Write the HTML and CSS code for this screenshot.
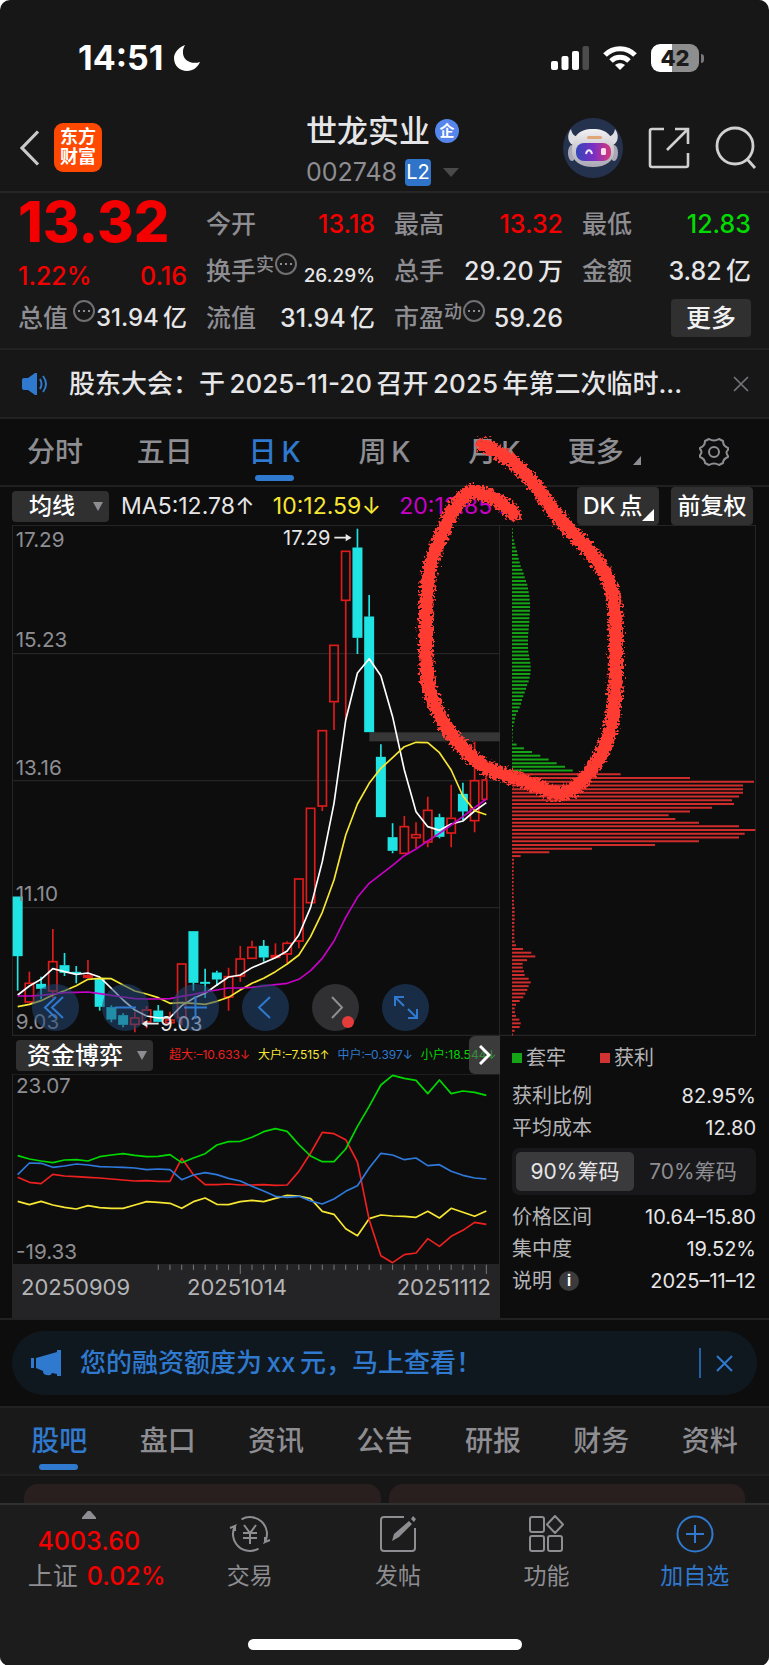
FILE: index.html
```html
<!DOCTYPE html>
<html lang="zh-CN">
<head>
<meta charset="utf-8">
<meta name="viewport" content="width=device-width, initial-scale=1">
<title>世龙实业 002748</title>
<link rel="stylesheet" href="styles.css">
</head>
<body>
<div class="app">
  <div class="status">
    <div class="status-time">14:51
      <svg width="26" height="26" viewBox="0 0 26 26"><path d="M11 0C3 3 0 9 0 13c0 8 6 13 13 13 6 0 11-4 13-9C17 20 8 15 9 6c0-2 1-4 2-6z" fill="#fff"/></svg>
    </div>
    <div class="status-icons">
      <svg width="38" height="24" viewBox="0 0 38 24" fill="#fff"><rect y="15" width="7" height="9" rx="2"/><rect x="10.500" y="10" width="7" height="14" rx="2"/><rect x="21" y="5" width="7" height="19" rx="2"/><rect x="31.500" width="6.500" height="24" rx="2" fill="#4c4c4c"/></svg>
      <svg class="wifi" width="34" height="24" viewBox="0 0 34 24" fill="none" stroke="#fff" stroke-width="5"><path d="M2 9c8-8.500 22-8.500 30 0"/><path d="M8 15c5-5 13-5 18 0"/><path d="M17 24l-5-5c3-2.500 7-2.500 10 0z" fill="#fff" stroke="none"/></svg>
      <span class="battery">42</span>
    </div>
  </div>

  <header class="header">
    <div class="header-side header-left">
      <button class="icon-btn" aria-label="返回"><svg width="21" height="36" viewBox="0 0 21 36" fill="none" stroke="#c9c9c9" stroke-width="3.200"><path d="M19 1.500 3 18l16 16.500"/></svg></button>
      <a class="logo" href="#">东方<br>财富</a>
    </div>
    <div class="header-title">
      <h1>世龙实业<span class="corp">企</span></h1>
      <p class="code">002748<span class="l2">L2</span><svg width="16" height="9" viewBox="0 0 16 9"><path d="M0 0h16L8 9z" fill="#4a4a4a"/></svg></p>
    </div>
    <div class="header-side header-right">
      <button class="icon-btn" aria-label="智能助手">
        <svg width="60" height="60" viewBox="0 0 60 60"><defs><linearGradient id="visor"><stop offset="0" stop-color="#3146b8"/><stop offset=".5" stop-color="#7a2fc4"/><stop offset="1" stop-color="#d83878"/></linearGradient><linearGradient id="shell" x2="0" y2="1"><stop offset="0" stop-color="#f1f0f2"/><stop offset="1" stop-color="#aaa8b5"/></linearGradient></defs><circle cx="30" cy="30" r="30" fill="#25324e"/><path d="M10 27C4 24 4 16 8 11c1 5 3 7 7 8M50 27c6-3 6-11 2-16-1 5-3 7-7 8" fill="#dedde2"/><ellipse cx="9" cy="35" rx="4" ry="8" fill="#a9a8b4"/><ellipse cx="51" cy="35" rx="4" ry="8" fill="#a9a8b4"/><path d="M30 11c15 0 21 8 21 22 0 10-8 16-21 16S9 43 9 33c0-14 6-22 21-22z" fill="url(#shell)"/><rect x="13" y="25" width="35" height="18" rx="8" fill="url(#visor)"/><rect x="24" y="18" width="15" height="3" rx="1.500" fill="#dfa777"/><path d="M23 36c1-5 5-5 6 0" fill="none" stroke="#e8e8ff" stroke-width="2"/><rect x="38" y="30" width="5" height="7" rx="1.500" fill="#ffdbe8"/></svg>
      </button>
      <button class="icon-btn" aria-label="分享"><svg width="42" height="42" viewBox="0 0 42 42" fill="none" stroke="#d0d0d0" stroke-width="2.600"><path d="M16 2H4a2 2 0 0 0-2 2v34a2 2 0 0 0 2 2h34a2 2 0 0 0 2-2V26M27 2h13v15M39 3 19 23"/></svg></button>
      <button class="icon-btn" aria-label="搜索"><svg width="42" height="43" viewBox="0 0 42 43" fill="none" stroke="#d0d0d0" stroke-width="2.800"><circle cx="20" cy="20" r="18"/><path d="m32 33 8 9"/></svg></button>
    </div>
  </header>

  <section class="quote">
    <div class="cell price up">13.32</div>
    <div class="cell"><span>今开</span><b class="up">13.18</b></div>
    <div class="cell"><span>最高</span><b class="up">13.32</b></div>
    <div class="cell"><span>最低</span><b class="down">12.83</b></div>
    <div class="cell change up"><b>1.22%</b><b>0.16</b></div>
    <div class="cell"><span>换手<sup>实</sup><i class="dots"></i></span><b class="small">26.29%</b></div>
    <div class="cell"><span>总手</span><b>29.20&thinsp;万</b></div>
    <div class="cell"><span>金额</span><b>3.82&thinsp;亿</b></div>
    <div class="cell"><span>总值<i class="dots apart"></i></span><b class="mid">31.94&thinsp;亿</b></div>
    <div class="cell"><span>流值</span><b>31.94&thinsp;亿</b></div>
    <div class="cell"><span>市盈<sup>动</sup><i class="dots"></i></span><b>59.26</b></div>
    <div class="cell cell-end"><button class="more-btn">更多</button></div>
  </section>

  <section class="notice">
    <svg width="26" height="22" viewBox="0 0 26 22"><path d="M0 7q0-2 2-2h4l7-5q2-1 2 1v20q0 2-2 1l-7-5H2q-2 0-2-2z" fill="#2f79cf"/><path d="M18 6q3 5 0 10M21 3q6 8 0 16" fill="none" stroke="#2f79cf" stroke-width="2"/></svg>
    <a href="#">股东大会：于&thinsp;2025-11-20&thinsp;召开&thinsp;2025&thinsp;年第二次临时...</a>
    <button class="icon-btn" aria-label="关闭"><svg width="16" height="16" viewBox="0 0 16 16" stroke="#77777b" stroke-width="1.600"><path d="m1 1 14 14M15 1 1 15"/></svg></button>
  </section>

  <section class="chart">
    <nav class="periods">
      <button>分时</button><button>五日</button><button class="active">日&thinsp;K</button><button>周&thinsp;K</button><button>月&thinsp;K</button><button>更多<svg class="corner" width="8" height="9" viewBox="0 0 8 9"><path d="M8 0v9H0z" fill="#8d8d92"/></svg></button>
      <button aria-label="设置"><svg width="32" height="30" viewBox="0 0 32 30" fill="none" stroke="#8d8d92" stroke-width="2"><path d="M11 2q5 3 10 0l4 2q0 5 5 7v2q-3 2 0 6v1q-5 2-5 6l-4 2q-5-3-10 0l-4-2q0-4-5-6v-2q3-3 0-6v-1q5-2 5-7z" stroke-linejoin="round"/><circle cx="16" cy="15" r="5"/></svg></button>
    </nav>
    <div class="toolbar">
      <span class="picker"><select aria-label="指标"><option>均线</option></select></span>
      <p class="ma"><span>MA5:12.78<i>↑</i></span><span class="yellow">10:12.59<i>↓</i></span><span class="magenta">20:12.85<i>↑</i></span></p>
      <button class="tool dk">DK&thinsp;点<svg width="12" height="12" viewBox="0 0 12 12"><path d="M12 0v12H0z" fill="#fff"/></svg></button>
      <button class="tool">前复权</button>
    </div>
    <div class="board">
      <div class="left">
        <div class="kline">
          <svg id="kline" class="plot" viewBox="36 -765 1464 1533">
            <path d="M37-764H1499V766H37zM37-379H1499M37 2H1499M37 383H1499" fill="none" stroke="#252526" stroke-width="4"/>
            <rect x="1108" y="-143" width="392" height="27" fill="#363636"/>
            <g id="candles" stroke-width="5"></g>
            <g class="axis"><text x="47" y="-700">17.29</text><text x="47" y="-400">15.23</text><text x="47" y="-16">13.16</text><text x="47" y="364">11.10</text><text x="47" y="746">9.03</text></g>
            <g id="averages" fill="none" stroke-width="5"></g>
            <g class="marks"><text x="849" y="-706">17.29</text><text x="481" y="752">9.03</text></g>
            <path d="M1003-727h40M440 731h36" stroke="#e8e8e8" stroke-width="5"/><path d="M1055-727l-18-11v22zM424 731l18-11v22z" fill="#e8e8e8"/>
          </svg>
          <div class="controls">
            <button aria-label="最早"><svg viewBox="0 0 47 47"><path d="M24 13 13 23.500 24 34M31 13 20 23.500 31 34"/></svg></button>
            <button aria-label="缩小"><svg viewBox="0 0 47 47"><path d="M13 23.500h21"/></svg></button>
            <button aria-label="放大"><svg viewBox="0 0 47 47"><path d="M12 23.500h23M23.500 12v23"/></svg></button>
            <button aria-label="左移"><svg viewBox="0 0 47 47"><path d="M28 13 17 23.500 28 34"/></svg></button>
            <button class="gray" aria-label="右移"><svg viewBox="0 0 47 47"><path d="m20 13 10 10.500L20 34"/><circle cx="36" cy="38" r="6" fill="#e43b3b" stroke="none"/></svg></button>
            <button aria-label="全屏"><svg viewBox="0 0 47 47"><path d="M22 13h-9v9M13 13l9 9M26 34h9v-9M35 34l-9-9"/></svg></button>
          </div>
        </div>
        <div class="fund-head">
          <span class="picker wide"><select aria-label="副图指标"><option>资金博弈</option></select></span>
          <p class="fund-values"><span class="c-red">超大:–10.633↓</span><span class="c-yellow">大户:–7.515↑</span><span class="c-blue">中户:–0.397↓</span><span class="c-green">小户:18.544↓</span></p>
          <button class="next" aria-label="展开"><svg width="12" height="20" viewBox="0 0 12 20" fill="none" stroke="#fff" stroke-width="3"><path d="m1 1 9 9-9 9"/></svg></button>
        </div>
        <svg class="plot" viewBox="36 133 1464 570">
          <path d="M37 133H1499V703M37 133V703" fill="none" stroke="#252526" stroke-width="4"/>
          <g class="axis"><text x="48" y="190">23.07</text><text x="48" y="688">-19.33</text></g>
          <g id="funds" fill="none" stroke-width="5"></g>
        </svg>
        <div class="dates">
          <svg class="plot ticks" viewBox="36 702 1464 30"><g id="ticks" stroke="#77777a" stroke-width="3"></g></svg>
          <div class="date-row"><span>20250909</span><span>20251014</span><span>20251112</span></div>
        </div>
      </div>
      <div class="right">
        <svg class="plot" viewBox="0 -765 768 1533"><path d="M0-764H767V766H0" fill="none" stroke="#252526" stroke-width="4"/><g id="chips" stroke-width="6"></g></svg>
        <div class="stats">
          <p class="legend"><span class="key trapped">套牢</span><span class="key profit">获利</span></p>
          <p class="stat"><span>获利比例</span><b>82.95%</b></p>
          <p class="stat"><span>平均成本</span><b>12.80</b></p>
          <div class="segment"><button class="on">90%筹码</button><button>70%筹码</button></div>
          <p class="stat"><span>价格区间</span><b>10.64–15.80</b></p>
          <p class="stat"><span>集中度</span><b>19.52%</b></p>
          <p class="stat"><span>说明<i class="info">i</i></span><b>2025–11–12</b></p>
        </div>
      </div>
    </div>
    <svg class="scribble" viewBox="0 418 769 900" aria-hidden="true">
      <defs><filter id="rough" x="-10%" y="-10%" width="120%" height="120%"><feTurbulence type="fractalNoise" baseFrequency=".4" numOctaves="2" seed="4"/><feDisplacementMap in="SourceGraphic" scale="11" xChannelSelector="R" yChannelSelector="G"/></filter></defs>
      <g filter="url(#rough)"><path transform="translate(340 420) scale(.333)" d="M428 72C470 92 505 108 535 138S590 195 610 225S660 300 700 338S780 425 802 470S828 560 828 640S832 790 822 870S790 1000 760 1040S705 1112 670 1118S600 1098 560 1083S460 1060 425 1032S330 950 300 885S262 800 260 740S256 580 262 500S290 380 310 330S350 240 395 210C430 215 490 240 522 280" fill="none" stroke="#ff3b30" stroke-width="43" stroke-linecap="round" stroke-linejoin="round"/></g>
    </svg>
  </section>

  <section class="promo-wrap">
    <div class="promo">
      <svg width="30" height="26" viewBox="0 0 30 26" fill="#2f79cf"><path d="M0 8h3v10H0zM5 8 26 2V0h4v26h-4v-2l-5-1q-1 3-5 2-4 0-4-4l-7-3z"/></svg>
      <a href="#">您的融资额度为&thinsp;xx&thinsp;元，马上查看！</a>
      <button class="icon-btn promo-close" aria-label="关闭"><svg width="17" height="17" viewBox="0 0 17 17" stroke="#2f79cf" stroke-width="2"><path d="m1 1 15 15M16 1 1 16"/></svg></button>
    </div>
  </section>

  <nav class="sections">
    <button class="active">股吧</button><button>盘口</button><button>资讯</button><button>公告</button><button>研报</button><button>财务</button><button>资料</button>
  </nav>
  <div class="cards"><div></div><div></div></div>

  <footer class="bottom">
    <div class="nav">
      <a class="index" href="#"><svg width="14" height="8" viewBox="0 0 14 8"><path d="M7 0l7 8H0z" fill="#8d8d92"/></svg><b class="up">4003.60</b><span class="index-row">上证<b class="up">0.02%</b></span></a>
      <a href="#"><svg width="42" height="38" viewBox="0 0 42 38"><path d="M12.500 4.300A17 17 0 0 1 36 27l5-2M29.500 33.700A17 17 0 0 1 6 11l-5 2M6 11v5M36 27v-5M15 10l6 8 6-8M21 18v11M14 18h14M14 23h14"/></svg>交易</a>
      <a href="#"><svg width="38" height="38" viewBox="0 0 38 38"><path d="M25 2H5a3 3 0 0 0-3 3v28a3 3 0 0 0 3 3h28a3 3 0 0 0 3-3V13"/><path d="m13 26 2-7L30 6l3 3-13 13zM32 4l2-3 3 3-2 3z" fill="#8d8d92" stroke="none"/></svg>发帖</a>
      <a href="#"><svg width="36" height="38" viewBox="0 0 36 38"><rect x="2" y="2" width="14" height="15" rx="2"/><rect x="2" y="21" width="14" height="15" rx="2"/><rect x="20" y="21" width="14" height="15" rx="2"/><path d="m27 1 8 8.500-8 8.500-8-8.500z" stroke-linejoin="round"/></svg>功能</a>
      <a class="add" href="#"><svg width="38" height="38" viewBox="0 0 38 38"><circle cx="19" cy="19" r="17.500"/><path d="M10 19h18M19 10v18"/></svg>加自选</a>
    </div>
    <div class="home"></div>
  </footer>
</div>
<script src="charts.js"></script>
</body>
</html>
```
FILE: styles.css
```css
* { box-sizing: border-box; }
body { margin: 0; background: #fff; font-family: Inter, "Noto Sans CJK SC", sans-serif; color: #e6e6e8; line-height: 28px; }
h1, p { margin: 0; }
b { font-weight: 500; }
i { font-style: normal; }
a { color: inherit; text-decoration: none; }
button, select { font: inherit; color: inherit; background: none; border: 0; padding: 0; margin: 0; }
svg { display: block; flex: none; }
.up { color: #f40000; }
.down { color: #00dc00; }
.app { background: #171717; border-radius: 10px; overflow: hidden; min-height: 100vh; display: flex; flex-direction: column; }

.status { height: 104px; padding: 12px 65px 0 78px; display: flex; justify-content: space-between; align-items: center; }
.status-time { display: flex; align-items: center; gap: 11px; font-size: 34px; font-weight: 700; line-height: 34px; color: #fff; }
.status-icons { display: flex; align-items: center; gap: 14px; }
.battery { position: relative; width: 48px; height: 28px; margin-right: 5px; border-radius: 9px; background: linear-gradient(90deg, #fff 43%, #8e8e8e 43%); color: #1b1b1b; font-size: 22px; font-weight: 800; line-height: 28px; text-align: center; }
.battery::after { content: ""; position: absolute; right: -5px; top: 10px; width: 3px; height: 9px; border-radius: 0 3px 3px 0; background: #77777a; }

.header { height: 89px; padding: 0 12px; display: grid; grid-template-columns: 1fr auto 1fr; align-items: center; border-bottom: 2px solid #262626; }
.header-side { display: flex; align-items: center; gap: 14px; }
.header-left { padding-left: 7px; }
.header-right { justify-content: flex-end; gap: 25px; }
.icon-btn { display: flex; align-items: center; justify-content: center; }
.logo { width: 48px; height: 49px; border-radius: 9px; background: #ff4800; color: #fff; font-size: 18px; line-height: 20px; font-weight: 700; text-align: center; padding-top: 4px; }
.header-title { padding: 5px 4px 0 0; }
.header-title h1 { display: flex; align-items: center; gap: 5px; font-size: 31px; line-height: 44px; font-weight: 500; }
.corp { width: 24px; height: 24px; border-radius: 50%; background: #5686ec; color: #fff; font-size: 15px; line-height: 23px; font-weight: 700; text-align: center; }
.code { display: flex; align-items: center; gap: 8px; font-size: 25px; line-height: 38px; color: #8d8d92; }
.l2 { width: 26px; height: 27px; border-radius: 4px; background: #2f74c8; color: #fff; font-size: 20px; line-height: 27px; text-align: center; }
.code svg { margin-left: 4px; }

.quote { display: grid; grid-template-columns: repeat(4, 1fr); grid-auto-rows: 47px; column-gap: 19px; padding: 7px 18px; border-bottom: 2px solid #222; background: #181818; }
.cell { display: flex; align-items: center; justify-content: space-between; white-space: nowrap; font-size: 25px; line-height: 36px; min-width: 0; }
.cell > span { display: flex; align-items: center; color: #8d8d92; font-weight: 500; }
.cell > .small { font-size: 19px; align-self: flex-end; }
.cell > .mid { font-size: 24px; }
.cell.price { font-size: 56px; font-weight: 800; line-height: 50px; align-items: flex-end; }
.cell.change { align-items: flex-end; }
.cell-end { justify-content: flex-end; }
sup { font-size: 18px; line-height: 24px; align-self: flex-start; }
.dots { width: 22px; height: 22px; margin-left: 1px; border: 2px solid #707074; border-radius: 50%; align-self: flex-start; display: grid; place-items: center; }
.apart { margin-left: 5px; }
.dots::before { content: ""; width: 12px; height: 2px; background: repeating-linear-gradient(90deg, #8d8d92 0 2px, transparent 2px 5px); }
.more-btn { width: 80px; height: 38px; border-radius: 4px; background: #303031; font-size: 25px; font-weight: 500; line-height: 38px; color: #f2f2f2; }

.notice { height: 67px; padding: 0 20px 0 22px; display: flex; align-items: center; gap: 21px; background: #171717; font-size: 26px; line-height: 36px; }
.notice a { flex: 1; min-width: 0; overflow: hidden; white-space: nowrap; font-weight: 500; }

.chart { position: relative; background: #0d0d0d; border-top: 2px solid #222; border-bottom: 2px solid #222; }
.periods { display: grid; grid-template-columns: repeat(7, 1fr); height: 68px; border-bottom: 2px solid #202020; color: #8d8d92; font-size: 28px; line-height: 40px; }
.periods button { position: relative; display: flex; justify-content: center; align-items: center; white-space: nowrap; font-weight: 500; }
.periods .corner { align-self: flex-end; margin: 0 0 20px 9px; }
.active { color: #2f79cf; }
.active::after { content: ""; position: absolute; left: 50%; bottom: 4px; width: 39px; height: 6px; margin-left: -20px; border-radius: 3px; background: #2f79cf; }
.toolbar { height: 38px; padding: 0 16px 0 12px; display: flex; align-items: center; gap: 12px; }
.picker { position: relative; width: 97px; height: 31px; flex: none; border-radius: 4px; background: #303031; }
.picker::after { content: ""; position: absolute; right: 6px; top: 11px; border: 5px solid transparent; border-top: 9px solid #8d8d92; border-bottom: 0; pointer-events: none; }
.picker select { appearance: none; width: 100%; height: 31px; padding-left: 17px; font-size: 23px; line-height: 31px; font-weight: 500; color: #fff; }
.ma { flex: 1; min-width: 0; display: flex; gap: 18px; font-size: 23px; white-space: nowrap; }
.ma i { display: inline-block; width: 20px; text-align: center; }
.yellow { color: #f7e733; }
.magenta { color: #c800c8; }
.tool { position: relative; height: 38px; width: 82px; flex: none; border-radius: 4px; background: #303031; font-size: 23px; font-weight: 500; line-height: 38px; color: #fff; white-space: nowrap; }
.dk { text-align: left; padding-left: 6px; }
.dk svg { position: absolute; right: 5px; bottom: 4px; }

.board { display: grid; grid-template-columns: 488fr 256fr; padding: 0 13px 0 12px; }
.left, .right { min-width: 0; }
.plot { width: 100%; height: auto; }
.kline { position: relative; }
.axis { fill: #8d8d92; font-size: 62px; }
.marks { fill: #e6e6e8; font-size: 60px; }
.controls { position: absolute; left: 20px; bottom: 5px; display: flex; gap: 23px; }
.controls button { width: 47px; height: 47px; border-radius: 50%; background: rgba(34, 71, 118, .55); }
.controls .gray { background: rgba(60, 60, 64, .75); }
.controls svg { width: 47px; height: 47px; fill: none; stroke: #2f79cf; stroke-width: 2; }
.controls .gray svg { stroke: #8d8d92; }
.fund-head { position: relative; height: 38px; padding-left: 4px; display: flex; align-items: center; gap: 16px; }
.wide { width: 137px; }
.wide select { padding-left: 11px; font-size: 24px; }
.fund-values { display: flex; gap: 8px; font-size: 12px; white-space: nowrap; }
.c-red { color: #ef2020; }
.c-yellow { color: #f7e733; }
.c-blue { color: #2f79cf; }
.c-green { color: #00d800; }
.next { position: absolute; right: 0; top: 0; width: 31px; height: 38px; border-radius: 6px 0 0 6px; background: rgba(90, 90, 92, .6); display: grid; place-items: center; }
.dates { height: 54px; background: #242426; color: #b4b4b7; font-size: 22px; }
.date-row { display: grid; grid-template-columns: 166fr 161fr 143fr; padding: 0 9px; line-height: 26px; }
.date-row span:last-child { text-align: right; }
.stats { padding: 8px 0 0 12px; font-size: 20px; color: #b4b4b7; }
.legend { display: flex; gap: 34px; margin-bottom: 8px; }
.key { display: flex; align-items: center; gap: 4px; }
.key::before { content: ""; width: 10px; height: 10px; background: #15a415; }
.profit::before { background: #d13232; }
.stat { display: flex; justify-content: space-between; align-items: center; height: 32px; white-space: nowrap; }
.stat b { color: #e6e6e8; font-weight: 400; }
.stat span { display: flex; align-items: center; gap: 7px; }
.info { width: 20px; height: 20px; border-radius: 50%; background: #3b3b3d; color: #fff; font-size: 15px; line-height: 20px; font-weight: 700; text-align: center; }
.segment { display: grid; grid-template-columns: 1fr 1fr; height: 47px; margin: 4px 0 6px; padding: 4px; border-radius: 7px; background: #18181a; font-size: 21px; color: #8d8d92; }
.segment button { border-radius: 5px; white-space: nowrap; }
.segment .on { background: #3a3a3c; color: #e6e6e8; }
.scribble { position: absolute; left: 0; top: 0; width: 100%; height: auto; pointer-events: none; }

.promo-wrap { padding: 11px 12px; background: #0d0d0d; border-bottom: 2px solid #222; }
.promo { height: 64px; padding: 0 24px 0 19px; border-radius: 32px; background: #10181f; color: #2f79cf; display: flex; align-items: center; gap: 19px; font-size: 26px; line-height: 36px; font-weight: 500; }
.promo a { flex: 1; white-space: nowrap; }
.promo-close { height: 30px; padding-left: 15px; border-left: 2px solid #2360a3; }
.sections { display: grid; grid-template-columns: repeat(7, 1fr); height: 68px; padding: 0 5px; background: #19191a; border-bottom: 2px solid #202021; font-size: 28px; line-height: 40px; color: #8d8d92; }
.sections button { position: relative; font-weight: 500; }
.cards { height: 27px; padding: 8px 24px 0; display: grid; grid-template-columns: 1fr 1fr; gap: 8px; background: #161616; }
.cards div { border-radius: 14px 14px 0 0; background: #2a1f1f; }
.bottom { flex: 1; min-height: 163px; display: flex; flex-direction: column; align-items: center; background: #1c1c1c; border-top: 2px solid #303030; }
.nav { width: 100%; display: grid; grid-template-columns: 175fr repeat(4, 148fr); }
.nav a { display: flex; flex-direction: column; align-items: center; padding-top: 10px; gap: 7px; font-size: 23px; line-height: 32px; color: #8d8d92; white-space: nowrap; }
.nav a > svg { fill: none; stroke: currentColor; stroke-width: 2; }
.nav .index { gap: 3px; padding: 6px 0 0 18px; font-size: 25px; }
.nav .index > b { padding-right: 16px; }
.index-row { display: flex; gap: 9px; }
.index > svg { margin: 0 16px 3px 0; }
.nav .add { color: #2f79cf; }
.home { width: 274px; height: 11px; margin: auto 0 16px; border-radius: 6px; background: #fff; }
```
FILE: charts.js
```javascript
const NS = 'http://www.w3.org/2000/svg';
const STEP = 35.15;
const X0 = 53;
const RED = '#e01b1b';
const CYAN = '#20e3e3';

function add(id, tag, attrs) {
  const el = document.createElementNS(NS, tag);
  for (const key in attrs) el.setAttribute(key, attrs[key]);
  document.getElementById(id).appendChild(el);
}

function line(id, values, color) {
  const points = values.map((y, i) => (X0 + i * STEP).toFixed(1) + ',' + y).join(' ');
  add(id, 'polyline', { points, stroke: color, 'stroke-linejoin': 'round' });
}

// [rising, high, body top, body bottom, low]
const candles = [
  [0,350,350,528,632],[1,575,608,668,668],[0,590,612,626,658],[1,447,543,635,655],[0,519,556,578,588],
  [0,558,576,580,610],[1,540,585,594,594],[0,596,596,680,692],[0,676,682,718,727],[0,700,706,734,742],
  [1,695,712,735,757],[1,678,688,728,745],[0,675,692,725,727],[1,695,718,730,732],[1,550,550,715,735],
  [0,454,454,608,632],[0,566,606,610,654],[0,572,578,598,618],[1,563,588,653,692],[1,498,535,590,605],
  [1,482,500,537,537],[0,480,498,532,545],[1,490,525,534,534],[1,484,488,524,550],[1,295,295,485,505],
  [1,83,83,370,370],[1,-150,-150,80,93],[1,-406,-406,-233,-150],[1,-688,-688,-537,-180],[0,-754,-697,-427,-378],
  [0,-555,-490,-144,-144],[0,-107,-69,111,111],[0,130,172,212,220],[1,108,138,222,222],[1,127,162,175,205],
  [1,50,89,188,202],[0,101,112,170,175],[1,14,113,161,202],[0,8,42,94,120],[1,-115,0,124,157],[1,-60,-2,60,60]
];
candles.forEach(([up, high, top, bottom, low], i) => {
  const x = X0 + i * STEP;
  const stroke = up ? RED : CYAN;
  add('candles', 'path', { d: `M${x} ${high}V${top}M${x} ${bottom}V${low}`, stroke });
  const width = i === candles.length - 1 ? 14 : 25;
  add('candles', 'rect', { x: x - 12.5, y: top + 2, width, height: Math.max(bottom - top - 4, 1), fill: up ? 'none' : CYAN, stroke });
});

line('averages', [645,618,598,566,575,583,579,591,625,660,690,708,714,713,677,655,640,615,591,585,563,548,533,513,465,382,245,70,-180,-321,-364,-313,-190,-30,95,140,151,132,123,93,68], '#ffffff');
line('averages', [680,673,662,645,632,617,598,595,596,615,633,642,653,670,668,670,673,664,652,630,610,595,575,552,525,470,397,300,165,72,10,-35,-67,-100,-113,-112,-82,-30,48,92,104], '#f7e733');
line('averages', [648,648,646,642,638,637,636,641,646,651,656,657,657,656,649,643,636,630,624,624,622,618,614,610,598,572,535,483,412,352,310,283,256,227,207,183,160,135,110,83,57], '#c800c8');

line('funds', [515,525,515,526,533,538,528,534,536,536,526,516,518,521,536,516,505,524,525,516,512,516,506,497,499,507,545,554,597,618,567,556,559,560,563,545,565,536,548,560,544], '#f7e733');
line('funds', [443,458,462,434,439,441,443,445,448,451,454,453,455,455,386,435,465,465,463,466,466,465,467,466,425,370,308,312,330,397,570,678,699,675,670,627,650,620,602,578,584], '#ef2020');
line('funds', [435,400,401,413,409,403,406,411,412,413,415,420,418,420,450,436,429,435,446,454,470,484,500,503,500,514,523,508,485,468,415,371,376,390,385,408,405,425,437,445,448], '#2f79dc');
line('funds', [378,388,394,399,391,390,394,381,376,372,377,381,380,375,399,385,372,346,336,335,323,306,297,305,345,379,396,396,358,290,230,166,137,146,152,192,151,192,184,188,197], '#00d800');

for (let i = 12; i <= 40; i++) {
  const x = X0 + i * STEP;
  add('ticks', 'path', { d: `M${x} 704V${i === 19 || i === 40 ? 732 : 720}` });
}

const trapped = [2,3,3,6,8,11,15,17,20,23,26,31,35,38,42,46,48,50,52,53,54,54,54,53,52,52,51,50,49,48,48,48,48,49,51,53,55,56,56,55,53,50,45,42,38,34,30,27,23,18,12,9,7,4,3,2,2,2,14,36,60,85,110,134,159,182];
const profit = [326,534,726,693,693,693,681,660,666,600,534,470,490,561,681,730,698,681,561,429,240,112,26,
  6,6,5,5,5,5,5,5,5,5,5,6,6,8,8,8,8,7,7,7,7,7,8,
  12,33,58,70,45,32,32,36,38,50,56,50,46,40,34,23,12,8,9,12,22,26,23,8,3];
trapped.concat(profit).forEach((length, i) => {
  const y = (-753 + i * 11.15).toFixed(1);
  add('chips', 'path', { d: `M36 ${y}h${length}`, stroke: i < trapped.length ? '#15a415' : '#cf2c2c' });
});
```
